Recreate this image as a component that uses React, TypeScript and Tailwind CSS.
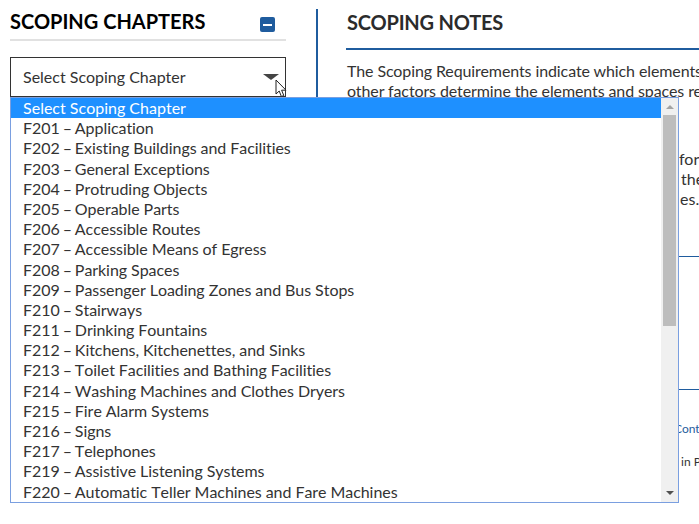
const chapters = [
  ["F201", "Application"],
  ["F202", "Existing Buildings and Facilities"],
  ["F203", "General Exceptions"],
  ["F204", "Protruding Objects"],
  ["F205", "Operable Parts"],
  ["F206", "Accessible Routes"],
  ["F207", "Accessible Means of Egress"],
  ["F208", "Parking Spaces"],
  ["F209", "Passenger Loading Zones and Bus Stops"],
  ["F210", "Stairways"],
  ["F211", "Drinking Fountains"],
  ["F212", "Kitchens, Kitchenettes, and Sinks"],
  ["F213", "Toilet Facilities and Bathing Facilities"],
  ["F214", "Washing Machines and Clothes Dryers"],
  ["F215", "Fire Alarm Systems"],
  ["F216", "Signs"],
  ["F217", "Telephones"],
  ["F219", "Assistive Listening Systems"],
  ["F220", "Automatic Teller Machines and Fare Machines"],
];

export default function App() {
  return (
    <div className="relative h-[524px] w-[699px] overflow-hidden bg-white font-['Lato',sans-serif] text-[#333]">
      <div className="flex h-full">
        {/* Left column */}
        <div className="ml-[10px] w-[276px] shrink-0">
          <div className="flex h-[41px] items-start justify-between border-b-2 border-[#e1e1e1] pr-[11px]">
            <h2 className="mt-[7px] text-[20px] font-bold leading-[28px] text-black">SCOPING CHAPTERS</h2>
            <div className="mt-[17px] flex h-[15px] w-[15px] items-center justify-center rounded-[2px] bg-[#1f5c9e]">
              <div className="h-[2px] w-[9px] bg-white" />
            </div>
          </div>
          <div className="mt-[16px] flex h-[40px] items-center justify-between border border-[#333] pl-[12px] pr-[6px] text-[16px]">
            <span>Select Scoping Chapter</span>
            <div className="h-0 w-0 border-x-[8px] border-t-[6px] border-x-transparent border-t-[#444]" />
          </div>
        </div>

        {/* Right column */}
        <div className="ml-[30px] h-full min-w-0 flex-1">
          <div className="mt-[9px] h-[400px] w-[383px] border-l-2 border-[#1f5c9e] pl-[28px]">
            <div className="w-[500px] whitespace-nowrap">
              <h2 className="ml-px text-[20px] font-bold leading-[26px] tracking-[-0.2px] text-[#2b2b2b]">SCOPING NOTES</h2>
              <div className="mt-[13px] h-[2px] bg-[#1f5c9e]" />
              <p className="ml-px mt-[11px] text-[16px] leading-[20px] tracking-[-0.1px]">
                The Scoping Requirements indicate which elements and spaces
                <br />
                other factors determine the elements and spaces required
              </p>
              <div className="mt-[48px] text-[16px] leading-[20px]">
                <p className="ml-[333px]">for</p>
                <p className="ml-[335px]">the</p>
                <p className="ml-[334px]">es.</p>
              </div>
              <div className="mt-[47px] h-px bg-[#1f5c9e]" />
              <div className="mt-[132px] h-px bg-[#1f5c9e]" />
              <p className="ml-[328px] mt-[31px] text-[12px] leading-[16px] text-[#1f5c9e]">Contact</p>
              <p className="ml-[335px] mt-[17px] text-[12px] leading-[16px]">in Person</p>
            </div>
          </div>
        </div>
      </div>

      {/* Open dropdown list */}
      <div className="absolute left-[10px] top-[97px] flex h-[406px] w-[669px] border border-[#7a9fe0] bg-white text-[16px] leading-[20.19px] text-[#333] [font-kerning:none]">
        <div className="min-w-0 flex-1">
          <div className="bg-[#1e90ff] pl-[12px] text-white">Select Scoping Chapter</div>
          {chapters.map(([code, title]) => (
            <div key={code} className="pl-[12px] whitespace-nowrap tracking-[-0.06px]">
              {code} <span className="-ml-[1px] tracking-[-1.2px]">–</span> {title}
            </div>
          ))}
        </div>
        <div className="flex w-[17px] shrink-0 flex-col items-center bg-[#f0f0f0]">
          <div className="mt-[7px] h-0 w-0 border-x-[4px] border-b-[4px] border-x-transparent border-b-[#a3a3a3]" />
          <div className="mt-[6px] h-[211px] w-[13px] bg-[#bdbdbd]" />
          <div className="mt-auto mb-[7px] h-0 w-0 border-x-[4px] border-t-[4px] border-x-transparent border-t-[#505050]" />
        </div>
      </div>

      {/* Mouse pointer */}
      <svg className="absolute left-[275px] top-[79px]" width="13" height="20" viewBox="0 0 13 20">
        <path d="M1 1 L1 15 L4.2 12 L6.4 17.5 L8.8 16.5 L6.6 11.2 L11 11.2 Z" fill="#fff" stroke="#222" strokeWidth="1" />
      </svg>
    </div>
  );
}
